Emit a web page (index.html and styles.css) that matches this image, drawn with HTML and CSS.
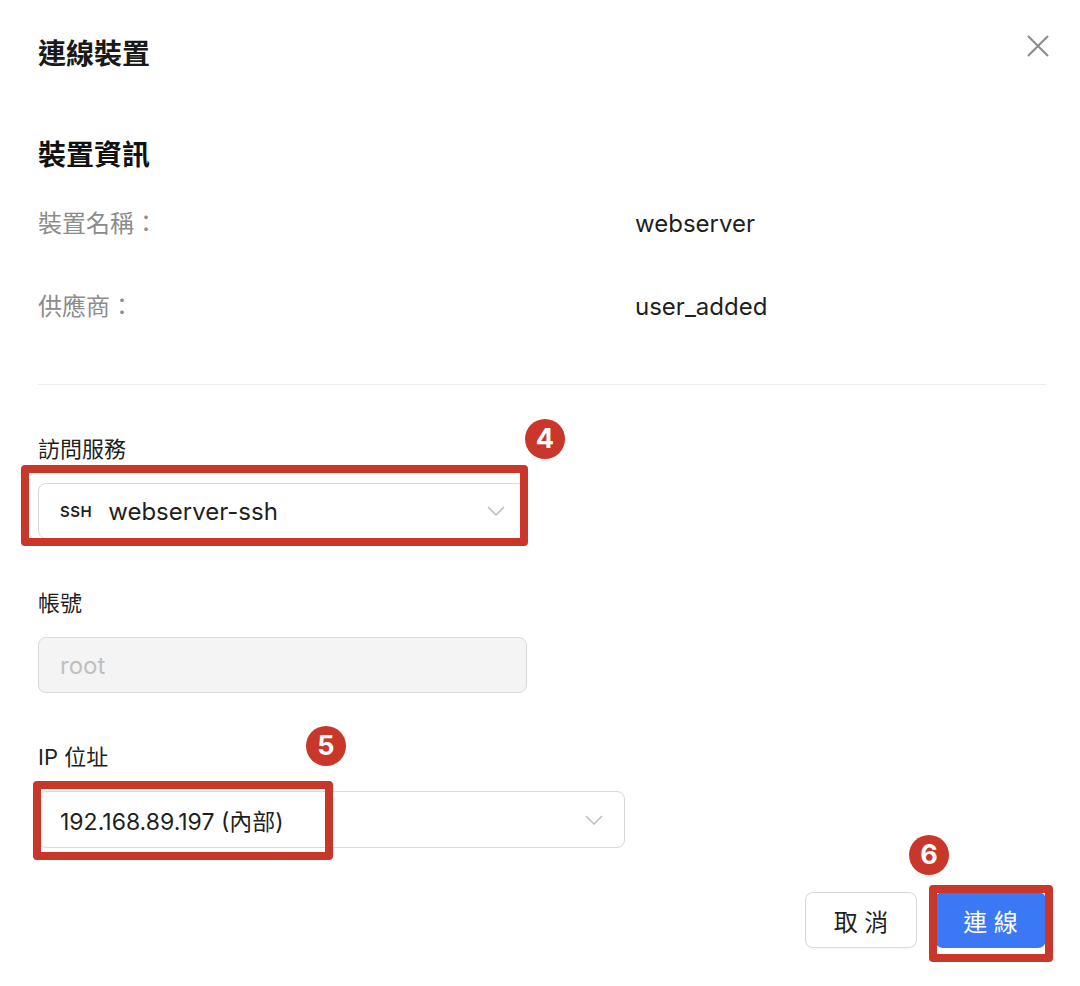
FILE: index.html
```html
<!DOCTYPE html>
<html lang="zh-Hant">
<head>
  <meta charset="UTF-8" />
  <meta name="viewport" content="width=device-width, initial-scale=1" />
  <title>連線裝置</title>
  <link rel="stylesheet" href="styles.css">
</head>
<body>
  <div class="dialog">
    <div class="dialog-header">
      <h1 class="dialog-title">連線裝置</h1>
      <button class="close-btn" aria-label="close">
        <svg width="22" height="22" viewBox="0 0 22 22">
          <path d="M1 1 L21 21 M21 1 L1 21" stroke="#8a8a8a" stroke-width="2" fill="none" />
        </svg>
      </button>
    </div>

    <h2 class="section-title">裝置資訊</h2>
    <div class="info">
      <div class="info-label">裝置名稱：</div>
      <div class="info-value">webserver</div>
      <div class="info-label">供應商：</div>
      <div class="info-value">user_added</div>
    </div>

    <div class="divider"></div>

    <div class="form-item">
      <label class="form-label">訪問服務</label>
      <div class="select select-service">
        <span class="tag">SSH</span>
        <span class="select-text">webserver-ssh</span>
        <svg class="chevron" width="18" height="10" viewBox="0 0 18 10">
          <polyline points="1,1 9,9 17,1" stroke="#bdbdbd" stroke-width="1.5" fill="none" />
        </svg>
      </div>
    </div>

    <div class="form-item">
      <label class="form-label">帳號</label>
      <div class="input input-disabled">root</div>
    </div>

    <div class="form-item">
      <label class="form-label">IP 位址</label>
      <div class="select select-ip">
        <span class="select-text">192.168.89.197 (內部)</span>
        <svg class="chevron" width="18" height="10" viewBox="0 0 18 10">
          <polyline points="1,1 9,9 17,1" stroke="#bdbdbd" stroke-width="1.5" fill="none" />
        </svg>
      </div>
    </div>

    <div class="footer">
      <button class="btn btn-default">取 消</button>
      <button class="btn btn-primary">連 線</button>
    </div>
  </div>

  <!-- annotations over the dialog -->
  <div class="mark mark-4"></div>
  <div class="badge badge-4">4</div>
  <div class="mark mark-5"></div>
  <div class="badge badge-5">5</div>
  <div class="mark mark-6"></div>
  <div class="badge badge-6">6</div>
</body>
</html>
```

FILE: styles.css
```css
body {
  margin: 0;
  padding: 0;
  background-color: #fff;
  font-family: Inter, "Noto Sans CJK TC", sans-serif;
  color: #1f1f1f;
}

.dialog {
  position: relative;
  box-sizing: border-box;
  width: 1080px;
  height: 986px;
  padding: 36px 34px 0 38px;
  background-color: #fff;
}

.dialog-header {
  display: flex;
  justify-content: space-between;
  align-items: flex-start;
  height: 36px;
}

.dialog-title {
  margin: 0;
  font-size: 28px;
  line-height: 36px;
  font-weight: bold;
  color: #1a1a1a;
}

.close-btn {
  margin: -1px -3px 0 0;
  padding: 0;
  border: none;
  background: none;
  width: 22px;
  height: 22px;
  cursor: pointer;
}

.section-title {
  margin: 65px 0 0;
  font-size: 28px;
  line-height: 36px;
  font-weight: bold;
  color: #111;
}

.info {
  display: grid;
  grid-template-columns: 597px 1fr;
  row-gap: 43px;
  margin-top: 31px;
}

.info-label,
.info-value {
  font-size: 24px;
  line-height: 40px;
}

.info-label {
  color: #8c8c8c;
}

.info-value {
  color: #1f1f1f;
}

.divider {
  margin-top: 57px;
  height: 1px;
  background-color: #ececec;
}

.form-item {
  margin-top: 48px;
}

.form-label {
  display: block;
  margin-bottom: 18px;
  font-size: 22px;
  line-height: 32px;
  color: #1f1f1f;
}

.select,
.input {
  display: flex;
  align-items: center;
  box-sizing: border-box;
  height: 56px;
  padding: 0 21px 0 21px;
  border: 1px solid #d9d9d9;
  border-radius: 8px;
  font-size: 24px;
}

.select-service {
  width: 489px;
}

.select-ip {
  width: 587px;
  height: 57px;
  font-size: 23px;
}

.select-text {
  flex: 1;
  color: #1f1f1f;
}

.tag {
  margin-right: 16px;
  font-size: 15px;
  font-weight: 600;
  letter-spacing: 0.5px;
  color: #1f1f1f;
}

.input {
  width: 489px;
}

.input-disabled {
  background-color: #f4f4f4;
  color: #bfbfbf;
}

.footer {
  display: flex;
  justify-content: flex-end;
  gap: 18px;
  margin-top: 44px;
}

.btn {
  height: 56px;
  border-radius: 8px;
  font-family: Inter, "Noto Sans CJK TC", sans-serif;
  font-size: 24px;
  cursor: pointer;
}

.btn-default {
  width: 112px;
  background-color: #fff;
  border: 1px solid #d9d9d9;
  color: #1f1f1f;
  box-shadow: 0 2px 0 rgba(0, 0, 0, 0.02);
}

.btn-primary {
  width: 111px;
  background-color: #3a78f5;
  border: none;
  color: #fff;
}

/* annotations */
.mark {
  position: absolute;
  box-sizing: border-box;
  border: 8px solid #c9372b;
  border-radius: 4px;
}

.mark-4 {
  left: 21px;
  top: 465px;
  width: 507px;
  height: 81px;
}

.mark-5 {
  left: 33px;
  top: 781px;
  width: 300px;
  height: 79px;
}

.mark-6 {
  left: 929px;
  top: 885px;
  width: 124px;
  height: 77px;
}

.badge {
  position: absolute;
  width: 40px;
  height: 40px;
  border-radius: 50%;
  background-color: #c9372b;
  color: #fff;
  font-size: 27px;
  font-weight: bold;
  line-height: 40px;
  text-align: center;
}

.badge-4 {
  left: 525px;
  top: 419px;
}

.badge-5 {
  left: 306px;
  top: 726px;
}

.badge-6 {
  left: 909px;
  top: 835px;
}
```
